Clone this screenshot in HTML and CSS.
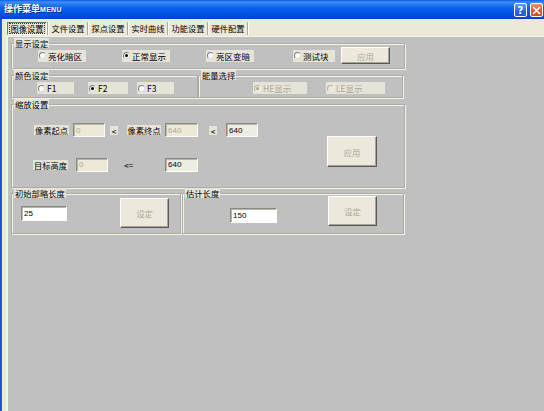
FILE: index.html
```html
<!DOCTYPE html>
<html>
<head>
<meta charset="utf-8">
<link rel="stylesheet" href="styles.css">
</head>
<body>
<div class="window">
  <div class="titlebar">
    <span class="title">操作菜单<b class="en">MENU</b></span>
    <div class="tbuttons">
      <span class="tbtn help">?</span>
      <span class="tbtn close"><svg width="9" height="9" viewBox="0 0 9 9"><path d="M1.5 1.5L7.5 7.5M7.5 1.5L1.5 7.5" stroke="#fff" stroke-width="1.6" stroke-linecap="round"/></svg></span>
    </div>
  </div>
  <div class="frame">
    <div class="frame-left"></div>
    <div class="main">
      <div class="tabstrip">
        <span class="tab active"><span class="focus">图像设置</span></span>
        <span class="sep"></span>
        <span class="tab">文件设置</span>
        <span class="sep"></span>
        <span class="tab">探点设置</span>
        <span class="sep"></span>
        <span class="tab">实时曲线</span>
        <span class="sep"></span>
        <span class="tab">功能设置</span>
        <span class="sep"></span>
        <span class="tab">硬件配置</span>
        <span class="sep"></span>
      </div>
      <div class="page">
        <div class="group g1">
          <div class="gtitle">显示设定</div>
          <div class="row1">
            <span class="radio r1"><i class="rc"></i>亮化暗区</span>
            <span class="radio r2"><i class="rc on"></i>正常显示</span>
            <span class="radio r3"><i class="rc"></i>亮区变暗</span>
            <span class="radio r4"><i class="rc"></i>测试块</span>
            <span class="btn b-apply1">应用</span>
          </div>
        </div>
        <div class="grow">
          <div class="group g2">
            <div class="gtitle">颜色设定</div>
            <div class="rrow">
              <span class="radio f1"><i class="rc"></i>F1</span>
              <span class="radio f2"><i class="rc on"></i>F2</span>
              <span class="radio f3"><i class="rc"></i>F3</span>
            </div>
          </div>
          <div class="group g3">
            <div class="gtitle">能量选择</div>
            <div class="rrow">
              <span class="radio dis he"><i class="rc on"></i>HE显示</span>
              <span class="radio dis le"><i class="rc"></i>LE显示</span>
            </div>
          </div>
        </div>
        <div class="group g4">
          <div class="gtitle">缩放设置</div>
          <div class="g4-body">
            <div class="fields">
              <div class="frow ra">
                <span class="lbl l1">像素起点</span>
                <span class="edit dis e1">0</span>
                <span class="lbl lt1">&lt;</span>
                <span class="lbl l2">像素终点</span>
                <span class="edit dis e2">640</span>
                <span class="lbl lt2">&lt;</span>
                <span class="edit ro e3">640</span>
              </div>
              <div class="frow rb">
                <span class="lbl l3">目标高度</span>
                <span class="edit dis e4">0</span>
                <span class="lbl plain lte">&lt;=</span>
                <span class="edit ro e5">640</span>
              </div>
            </div>
            <span class="btn tall">应用</span>
          </div>
        </div>
        <div class="grow last">
          <div class="group g5">
            <div class="gtitle">初始部略长度</div>
            <div class="sbody">
              <span class="edit white e6">25</span>
              <span class="btn set s5">设定</span>
            </div>
          </div>
          <div class="group g6">
            <div class="gtitle">估计长度</div>
            <div class="sbody">
              <span class="edit white e7">150</span>
              <span class="btn set s6">设定</span>
            </div>
          </div>
        </div>
      </div>
    </div>
  </div>
</div>
</body>
</html>
```
FILE: styles.css
```css
* { box-sizing: border-box; }
html, body { margin: 0; padding: 0; }
body {
  width: 544px;
  height: 411px;
  overflow: hidden;
  background: #c0c0c0;
  font-family: "Liberation Sans", "Noto Sans CJK SC", sans-serif;
  font-size: 8.5px;
  color: #000;
}
.window { display: flex; flex-direction: column; width: 544px; height: 411px; }

/* title bar */
.titlebar {
  height: 19px;
  flex: none;
  display: flex;
  align-items: center;
  background: linear-gradient(to bottom, #0a5be6 0, #3d8ff8 2px, #2a7af4 4px, #0c61ea 8px, #0058e6 12px, #004dda 16px, #003fc4 19px);
  color: #fff;
  padding-left: 4px;
}
.title {
  font-family: "Noto Sans CJK SC", sans-serif;
  font-weight: bold;
  font-size: 9px;
  line-height: 10px;
  text-shadow: 1px 1px 0 #0a2a8a;
  margin-top: -1px;
}
.title .en { font-family: "Liberation Sans", sans-serif; font-size: 7px; font-weight: bold; letter-spacing: 0.3px; }
.tbuttons { margin-left: auto; display: flex; gap: 3px; margin-right: 1px; margin-top: 1px; }
.tbtn {
  width: 13px;
  height: 14px;
  border: 1px solid #fff;
  border-radius: 2px;
  display: flex;
  align-items: center;
  justify-content: center;
  color: #fff;
}
.help {
  background: linear-gradient(to bottom, #6d9cf8, #2d62e3 60%, #2454d8);
  font-family: "DejaVu Sans", sans-serif;
  font-weight: bold;
  font-size: 10px;
}
.close { background: linear-gradient(to bottom, #ea9272, #d9542c 60%, #cc4a22); }

/* frame */
.frame { flex: 1; display: flex; min-height: 0; }
.frame-left { width: 7px; flex: none; background: linear-gradient(to right, #0a4ed8 0, #2a64e0 2px, #ece9d8 2px, #ece9d8 6px, #f6f5ee 6px); }
.main { flex: 1; display: flex; flex-direction: column; }

/* tabs */
.tabstrip {
  height: 17px;
  flex: none;
  background: #ece9d8;
  display: flex;
  align-items: flex-start;
  padding-top: 3px;
  font-family: "Noto Sans CJK SC", sans-serif;
  font-size: 8.2px;
}
.tab {
  width: 38px;
  height: 13px;
  line-height: 12px;
  text-align: center;
  color: #000;
}
.tab.active {
  width: 40px;
  border: 1px solid;
  border-color: #716f64 #fff #fff #716f64;
  background: #e6e3d4;
  display: flex;
  align-items: center;
  justify-content: center;
}
.focus { outline: 1px dotted #333; outline-offset: 0; line-height: 9px; padding: 0 1px; }
.sep { width: 2px; height: 13px; border-left: 1px solid #aca899; border-right: 1px solid #fff; }

/* page */
.page {
  flex: 1;
  background: #c0c0c0;
  border-top: 1px solid #f4f3ee;
  border-left: 1px solid #f4f3ee;
  padding: 6px 0 0 3px;
}

.group {
  border: 1px solid #acaba4;
  box-shadow: inset 1px 1px 0 #f2f2ee, 1px 1px 0 #f2f2ee;
}
.gtitle {
  width: fit-content;
  height: 10px;
  line-height: 10px;
  margin: -6px 0 0 2px;
  padding: 0 1px;
  background: #e6e4d9;
  font-family: "Noto Sans CJK SC", sans-serif;
  font-size: 8.3px;
}
.g1 { width: 394px; }
.row1 { display: flex; align-items: center; height: 17px; margin-top: -1px; margin-bottom: 4px; }

.radio {
  display: flex;
  align-items: center;
  gap: 2px;
  height: 12px;
  padding-left: 1px;
  background: #e6e4d9;
  font-family: "Noto Sans CJK SC", "Liberation Sans", sans-serif;
  font-size: 8.5px;
  line-height: 10px;
  white-space: nowrap;
}
.radio .rc {
  width: 7px;
  height: 7px;
  flex: none;
  border-radius: 50%;
  border: 1px solid;
  border-color: #7f7f7f #dcdcdc #dcdcdc #7f7f7f;
  background: #fff;
  display: flex;
  align-items: center;
  justify-content: center;
}
.radio .rc.on::after { content: ""; width: 3px; height: 3px; border-radius: 50%; background: #000; }
.radio.dis { color: #aca899; }
.radio.dis .rc { background: #ece9d8; border-color: #b5b3a8 #eeeeee #eeeeee #b5b3a8; }
.radio.dis .rc.on::after { background: #aca899; }

.r1 { margin-left: 26px; width: 48px; }
.r2 { margin-left: 36px; width: 48px; }
.r3 { margin-left: 36px; width: 48px; }
.r4 { margin-left: 39px; width: 42px; }

.btn {
  display: flex;
  align-items: center;
  justify-content: center;
  background: #ece9dc;
  border: 1px solid;
  border-color: #fff #5a5a5a #5a5a5a #fff;
  box-shadow: inset -1px -1px 0 #a6a49a;
  color: #aca899;
  font-family: "Noto Sans CJK SC", sans-serif;
  font-size: 8.3px;
}
.b-apply1 { margin-left: 6px; width: 49px; height: 17px; }

.grow { display: flex; margin-top: 6px; }
.g2 { width: 187px; }
.g3 { width: 205px; }
.rrow { display: flex; margin-top: 2px; height: 12px; margin-bottom: 3px; }
.f1 { margin-left: 25px; width: 37px; }
.f2 { margin-left: 14px; width: 40px; }
.f3 { margin-left: 9px; width: 37px; }
.he { margin-left: 54px; width: 54px; }
.le { margin-left: 19px; width: 59px; }

.g4 { width: 394px; margin-top: 6px; }
.g4-body { display: flex; align-items: flex-start; padding: 14px 0 15px 0; }
.fields { display: flex; flex-direction: column; gap: 20px; width: 246px; }
.frow { display: flex; align-items: center; }
.ra { height: 14px; }
.rb { height: 15px; }
.lbl {
  height: 10px;
  line-height: 10px;
  text-align: center;
  background: #e6e4d9;
  font-family: "Noto Sans CJK SC", "Liberation Sans", sans-serif;
  font-size: 8.3px;
}
.lbl.plain { background: transparent; }
.l1 { margin-left: 22px; width: 35px; }
.e1 { margin-left: 4px; width: 32px; }
.lt1 { margin-left: 5px; width: 8px; height: 9px; }
.l2 { margin-left: 9px; width: 34px; }
.e2 { margin-left: 4px; width: 33px; }
.lt2 { margin-left: 11px; width: 8px; height: 9px; }
.e3 { margin-left: 9px; width: 32px; }
.l3 { margin-left: 21px; width: 35px; }
.e4 { margin-left: 8px; width: 32px; }
.lte { margin-left: 15px; width: 11px; }
.e5 { margin-left: 31px; width: 33px; }

.edit {
  height: 14px;
  border: 1px solid;
  border-color: #8a8880 #fdfdfb #fdfdfb #8a8880;
  box-shadow: inset 1px 1px 0 #b8b6ac;
  padding-left: 2px;
  display: flex;
  align-items: center;
  font-family: "Liberation Sans", sans-serif;
  font-size: 8px;
  color: #000;
  background: #f0efe6;
}
.edit.dis { color: #aca899; background: #ece9d8; }
.edit.ro { background: #eeede3; }
.edit.white { background: #fff; height: 15px; }

.btn.tall { margin-left: 69px; margin-top: 13px; width: 50px; height: 31px; }

.grow.last { margin-top: 5px; gap: 1px; }
.g5 { width: 170px; }
.g6 { width: 222px; }
.sbody { display: flex; align-items: flex-start; }
.g5 .sbody { padding-bottom: 5px; }
.g6 .sbody { padding-bottom: 7px; }
.e6 { margin-left: 9px; margin-top: 8px; width: 46px; }
.s5 { margin-left: 53px; width: 49px; height: 30px; }
.e7 { margin-left: 47px; margin-top: 10px; width: 47px; }
.s6 { margin-left: 51px; margin-top: -2px; width: 49px; height: 30px; }
```
